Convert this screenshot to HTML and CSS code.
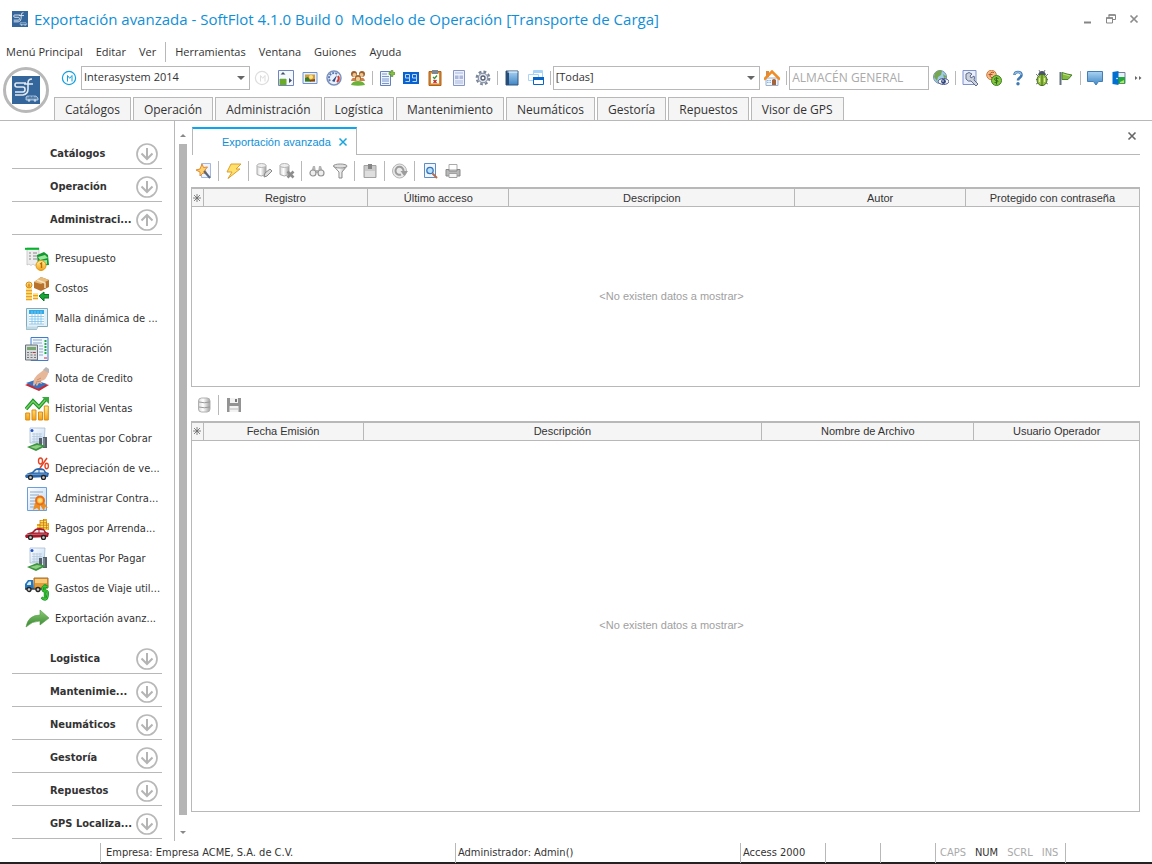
FILE: index.html
```html
<!DOCTYPE html>
<html lang="es">
<head>
<meta charset="utf-8">
<title>Exportación avanzada - SoftFlot</title>
<link rel="stylesheet" href="styles.css">
</head>
<body>
<svg class="defs" aria-hidden="true">
  <defs>
    <linearGradient id="gold" x1="0" y1="0" x2="0" y2="1"><stop offset="0" stop-color="#fff3a0"/><stop offset="1" stop-color="#f0a018"/></linearGradient>
    <linearGradient id="blue" x1="0" y1="0" x2="0" y2="1"><stop offset="0" stop-color="#a9d3f3"/><stop offset="1" stop-color="#3f86c4"/></linearGradient>
    <linearGradient id="paper" x1="0" y1="0" x2="1" y2="1"><stop offset="0" stop-color="#ffffff"/><stop offset="1" stop-color="#bfd9f3"/></linearGradient>
    <linearGradient id="leaf" x1="0" y1="0" x2="0" y2="1"><stop offset="0" stop-color="#8ccb76"/><stop offset="1" stop-color="#37852f"/></linearGradient>
    <linearGradient id="silver" x1="0" y1="0" x2="1" y2="0"><stop offset="0" stop-color="#d8d8d8"/><stop offset=".4" stop-color="#ffffff"/><stop offset="1" stop-color="#a0a0a0"/></linearGradient>
    <symbol id="down" viewBox="0 0 22 22"><circle cx="11" cy="11" r="10" fill="none" stroke="#b8b8b8" stroke-width="1.7"/><path d="M11 5v11M5.500 10.500l5.500 5.500 5.500-5.500" fill="none" stroke="#b4b4b4" stroke-width="2"/></symbol>
    <symbol id="up" viewBox="0 0 22 22"><circle cx="11" cy="11" r="10" fill="none" stroke="#b8b8b8" stroke-width="1.7"/><path d="M11 17V6M5.500 11.500l5.500-5.500 5.500 5.500" fill="none" stroke="#b4b4b4" stroke-width="2"/></symbol>
    <symbol id="logo" viewBox="0 0 28 28"><path fill="#34669c" d="M0 0h28v28H0z"/><path d="M14 7H4.500Q3 7 3 9q0 2 2 2h6q2 0 2 2.500T11 16H3M3 19h8q5-1 5-6V7q0-4 4-4M12 8h9" fill="none" stroke="#e2eaf2" stroke-width="1.600"/><path d="M15 20h9l2 2v2H14v-3z" fill="#7d9fc3" stroke="#b9cde0" stroke-width=".8"/><path d="M15 22h10M18 20v2M21 20v2" stroke="#34669c" stroke-width=".8"/><circle cx="17" cy="24.500" r="1.300" fill="#c5d6e6"/><circle cx="23" cy="24.500" r="1.300" fill="#c5d6e6"/></symbol>
    <symbol id="m" viewBox="0 0 16 16"><circle cx="8" cy="8" r="6.600" fill="none" stroke="currentColor" stroke-width="1.200"/><path d="M6.500 11.500V5.500l2.200 2.800 2.300-2.800v6" fill="none" stroke="currentColor"/></symbol>
    <symbol id="bill" viewBox="0 0 24 24"><path d="M5 1h15l-1 15H5z" fill="url(#paper)" stroke="#a8bdd2" stroke-width=".8"/><circle cx="7" cy="3.500" r="1.500" fill="#2050c8"/><path d="M7 7h10M7 9.500h10M7 12h10M7 14.500h10M9 6v10M12 6v10M15 6v10" stroke="#b4c6da" stroke-width=".7"/><path d="M14 11h3v9h-3zM18 10h4v11h-4z" fill="#56616b"/><path d="M19 11v9" stroke="#9aa6b0"/><path d="M2 20l10-4 9 3-10 5z" fill="#3c9440"/><path d="M5 20l7-2 5 1-6 3z" fill="#8fcf83"/></symbol>
    <symbol id="car" viewBox="0 0 24 12"><path d="M0 8q1-3 7-4l3-3q4-2 9 0l2 3 3 1-1 4-22 1z" fill="currentColor"/><path d="M8.500 4.500l3-2.500h2v2.500zM14.500 2q3 0 4 .5l1 2h-5z" fill="#e2edf6"/><path d="M1 6.500l21-.5" stroke="#fff" stroke-opacity=".55" stroke-width=".7"/><circle cx="5.500" cy="9.500" r="2" fill="#ccc" stroke="#222" stroke-width="1.300"/><circle cx="18.500" cy="9.500" r="2" fill="#ccc" stroke="#222" stroke-width="1.300"/></symbol>
  </defs>
</svg>

<header class="titlebar">
  <svg class="app-icon" viewBox="0 0 28 28"><use href="#logo"/></svg>
  <h1 class="title">Exportación avanzada - SoftFlot 4.1.0 Build 0&nbsp; Modelo de Operación [Transporte de Carga]</h1>
  <div class="window-buttons">
    <button type="button" aria-label="Minimizar"><svg viewBox="0 0 12 12"><path d="M2 9.500h7" stroke="#858585" stroke-width="2"/></svg></button>
    <button type="button" aria-label="Restaurar"><svg viewBox="0 0 12 12"><path d="M1.500 5h6v5h-6zM4 5V2h6.500v4.500H8" fill="none" stroke="#858585"/><path d="M1 5h7M3.500 2h7" stroke="#858585" stroke-width="1.600"/></svg></button>
    <button type="button" aria-label="Cerrar"><svg viewBox="0 0 12 12"><path d="M2.500 2.500l7 7M9.500 2.500l-7 7" stroke="#8c8c8c" stroke-width="1.700"/></svg></button>
  </div>
</header>

<nav class="menu" aria-label="Menú">
  <button type="button">Menú Principal</button><button type="button">Editar</button><button type="button">Ver</button><span class="menu-sep"></span><button type="button">Herramientas</button><button type="button">Ventana</button><button type="button">Guiones</button><button type="button">Ayuda</button>
</nav>

<div class="ribbon">
  <button type="button" class="orb" aria-label="SoftFlot"><svg viewBox="0 0 28 28"><use href="#logo"/></svg></button>
  <div class="ribbon-rows">
    <div class="toolbar">
      <button type="button" class="tool accent" aria-label="Modelo"><svg viewBox="0 0 16 16"><use href="#m"/></svg></button>
      <span class="combo combo-model"><select aria-label="Modelo de operación"><option>Interasystem 2014</option></select></span>
      <button type="button" class="tool faded" aria-label="Modelo inactivo"><svg viewBox="0 0 16 16"><use href="#m"/></svg></button>
      <button type="button" class="tool" aria-label="Panel"><svg viewBox="0 0 16 16"><path d="M.5.500h15v15H.5z" fill="#f5f8fd" stroke="#7085bd"/><path d="M1.500 9h7v6h-7z" fill="#6bab28"/><path d="M2 8.500h6" stroke="#d3dde8"/><path d="M5 2L2.500 4.500h5zM11 8l3 2.500-3 2.500z" fill="#44506a"/></svg></button>
      <button type="button" class="tool" aria-label="Imagen"><svg viewBox="0 0 16 16"><path d="M1 2.500h14v11H1z" fill="#e8f1ff" stroke="#7192c8"/><path d="M3 4.500h10v7H3z" fill="#ce9c3d"/><path d="M3 8l3-1 3 4.500H3z" fill="#397b2c"/><circle cx="9" cy="7" r="2" fill="#ffe27a"/><path d="M8 10l5-1v2.500H8z" fill="#834a19"/></svg></button>
      <button type="button" class="tool" aria-label="Indicadores"><svg viewBox="0 0 16 16"><circle cx="8" cy="8" r="7" fill="#e9f2fc" stroke="#7b91bd" stroke-width="1.500"/><path d="M4 11a5 5 0 0 1 7-7" fill="none" stroke="#5d7bb5" stroke-width="2" stroke-dasharray="2 1"/><path d="M12 6q2 3-1 6" fill="none" stroke="#d8392b" stroke-width="2"/><path d="M6 11l5-6-2.500 7z" fill="#344b87"/></svg></button>
      <button type="button" class="tool" aria-label="Usuarios"><svg viewBox="0 0 16 16"><circle cx="4" cy="4" r="3" fill="#9b6030"/><circle cx="12" cy="4" r="3" fill="#9b6030"/><circle cx="4.500" cy="5" r="2" fill="#f1c58f"/><circle cx="11.500" cy="5" r="2" fill="#f1c58f"/><path d="M1 11q1-4 4-3h6q3-1 4 3z" fill="#d07f4c"/><circle cx="8" cy="8" r="3" fill="#9e652d"/><circle cx="8" cy="9" r="2.200" fill="#f4cc95"/><path d="M1 15q1-4 7-4t7 4q-7 1.500-14 0" fill="#6cb13a"/></svg></button>
      <span class="sep"></span>
      <button type="button" class="tool" aria-label="Nuevo registro"><svg viewBox="0 0 16 16"><path d="M1.500 1.500h10v14h-10z" fill="#edf4ff" stroke="#6680b9"/><path d="M3 4h5M3 6.500h7M3 9h7M3 11h7M3 13.500h7" stroke="#7a96cb"/><path d="M10 2.500h2V.500h2v2h2v2h-2v2h-2v-2h-2z" fill="#86c043" stroke="#568d29" stroke-width=".6"/></svg></button>
      <button type="button" class="tool" aria-label="Contador"><svg viewBox="0 0 16 16"><path d="M0 2h16v12H0z" fill="#0a62ce"/><path d="M6.500 8h-4V4.500h4v7h-4M13.500 8h-4V4.500h4v7h-4" fill="none" stroke="#bcd8ff"/></svg></button>
      <button type="button" class="tool" aria-label="Tareas"><svg viewBox="0 0 16 16"><path d="M2 1.500h12v14H2z" fill="#d9882d" stroke="#ad611a"/><path d="M4 3.500h8v10H4z" fill="#fff"/><path d="M5 0h6v4H5z" fill="#7f8792"/><path d="M6 7l1.500 1.500L10 5.500" fill="none" stroke="#369333" stroke-width="1.300"/><path d="M6.500 10l3 3M9.500 10l-3 3" stroke="#c32929" stroke-width="1.300"/></svg></button>
      <button type="button" class="tool" aria-label="Formulario"><svg viewBox="0 0 16 16"><path d="M2.500.500h11v15h-11z" fill="#eaf0fc" stroke="#8796c5"/><path d="M4 3h8M4 11h8M4 13h8" stroke="#a9b8dc"/><path d="M4 5.500h3.500v3.500H4zM8.500 5.500H12v3.500H8.500z" fill="#a9b8dc"/></svg></button>
      <button type="button" class="tool" aria-label="Configuración"><svg viewBox="0 0 16 16"><circle cx="8" cy="8" r="6.300" fill="none" stroke="#7a859a" stroke-width="2.200" stroke-dasharray="2.800 2.100"/><circle cx="8" cy="8" r="4.800" fill="#dfe4ec" stroke="#7a859a"/><circle cx="8" cy="8" r="2" fill="#fff" stroke="#545f76" stroke-width="1.300"/></svg></button>
      <span class="sep"></span>
      <button type="button" class="tool" aria-label="Catálogo"><svg viewBox="0 0 16 16"><path d="M2 1h12v14H2z" fill="url(#blue)" stroke="#31577f"/><path d="M2 1h3v14H2z" fill="#294c77"/><path d="M3.500 1.500h10v1h-10z" fill="#eef7ff"/></svg></button>
      <button type="button" class="tool" aria-label="Ventanas"><svg viewBox="0 0 16 16"><path d="M5.500.500h9v7h-9z" fill="#fff" stroke="#a8d5f7"/><path d="M5 1h10v2H5z" fill="#a8d5f7"/><path d="M.5 4.500h10v6H.5z" fill="#fff" stroke="#a8d5f7"/><path d="M5.500 7.500h10v7h-10z" fill="#fff" stroke="#0666c7"/><path d="M5 7h11v3H5z" fill="#0666c7"/></svg></button>
      <span class="sep"></span>
      <span class="combo combo-filter"><select aria-label="Filtro"><option>[Todas]</option></select></span>
      <button type="button" class="tool" aria-label="Inicio"><svg viewBox="0 0 16 16"><path d="M2 8h12v7.500H2z" fill="#f2f6fc" stroke="#9ab0ce"/><path d="M2 1h3v6H2z" fill="#d88b45"/><path d="M0 9.500l8-8 8 8" fill="none" stroke="#ef8c25" stroke-width="2.500"/><path d="M8 15v-5q2-2 4 0v5z" fill="#a46437"/><path d="M3 10h4v3H3z" fill="#8ab9e8"/><path d="M5 10v3M3 11.500h4" stroke="#fff" stroke-width=".7"/></svg></button>
      <span class="sep"></span>
      <input class="store" type="text" value="ALMACÉN GENERAL" aria-label="Almacén" readonly>
      <button type="button" class="tool" aria-label="Vista global"><svg viewBox="0 0 16 16"><circle cx="7" cy="7" r="6.500" fill="#9dcbe8" stroke="#7891a7"/><path d="M2 3q4-4 7-2l-1 4-3 2-1 4-3-4zM10 4l4 3-3 1z" fill="#76a650"/><ellipse cx="10.500" cy="11.500" rx="5.300" ry="3" fill="#f6f8ff" stroke="#4c5684"/><circle cx="10.500" cy="11.500" r="2.400" fill="#30457c"/><circle cx="10" cy="11" r=".8" fill="#fff"/></svg></button>
      <span class="sep"></span>
      <button type="button" class="tool" aria-label="Herramientas"><svg viewBox="0 0 16 16"><path d="M1 .5h13v14H1z" fill="#e9efff" stroke="#7e91c8"/><path d="M4 4q3-3 6 0l-2 2 1 2 3-2q1 2 0 4l4 4-2 2-5-5q-3 1-5-2z" fill="#cbd2db" stroke="#536080" stroke-width=".9"/></svg></button>
      <button type="button" class="tool" aria-label="Monedas"><svg viewBox="0 0 16 16"><circle cx="5.500" cy="5" r="4.800" fill="#f5bd85" stroke="#c97b44"/><path d="M8 2.500Q4 1.500 4 5t4 2.500M2.500 4.500h4" fill="none" stroke="#b05532"/><circle cx="10.500" cy="10.500" r="5" fill="#86c53c" stroke="#398325"/><path d="M12.500 8.500q-4-1.500-4 .5t3 1.500q2 1.500-3 2M10.500 7v7.500" fill="none" stroke="#2f6d1c"/></svg></button>
      <button type="button" class="tool" aria-label="Ayuda"><svg viewBox="0 0 16 16"><path d="M4.500 5q0-3 3.500-3t3.500 3Q11.500 7 9.500 8 8 9 8 10.500" fill="none" stroke="#3f78b3" stroke-width="2.600"/><path d="M4.700 4.500Q5 2 8 2t3 3" fill="none" stroke="#9cc5e8" stroke-width="1.200"/><circle cx="8" cy="13.700" r="1.700" fill="#3f78b3"/></svg></button>
      <button type="button" class="tool" aria-label="Reportar error"><svg viewBox="0 0 16 16"><path d="M4 6L2 4M12 6l2-2M4 9.500H2M12 9.500h2M4 13l-2 1M12 13l2 1M6 2L5 0M10 2l1-2" stroke="#66706a" stroke-width=".9"/><path d="M4 5q1-4 4-4t4 4z" fill="#48546a"/><ellipse cx="8" cy="10" rx="5" ry="5.600" fill="#95c041" stroke="#456d24"/><path d="M8 5v10" stroke="#416a23"/><path d="M5.500 8v4M10.500 8v4" stroke="#ddf09c" stroke-width="1.300"/></svg></button>
      <button type="button" class="tool" aria-label="Bandera"><svg viewBox="0 0 16 16"><path d="M2.500 2v13" stroke="#657080" stroke-width="2"/><path d="M4 2.500l5 1.500 5 1-4 4.500H4z" fill="#86bb40" stroke="#4b8233"/><path d="M5 4l7 2" stroke="#bde573"/></svg></button>
      <span class="sep"></span>
      <button type="button" class="tool" aria-label="Mensajes"><svg viewBox="0 0 16 16"><path d="M.5 1.500h15v10h-4L9 15l-2.500-3.500h-6z" fill="url(#blue)" stroke="#427fb6"/></svg></button>
      <button type="button" class="tool" aria-label="Salir"><svg viewBox="0 0 16 16"><path d="M6 2.500h8v11H6z" fill="#e8f0f8" stroke="#72819b"/><path d="M7 7h7v6.500H7z" fill="#22a83f"/><path d="M9 12l4-2v3H9z" fill="#b4e75b"/><path d="M1.500 2L7.500 1v14l-6-1z" fill="#006fd0"/><circle cx="6" cy="8.500" r=".8" fill="#fff"/></svg></button>
      <button type="button" class="tool tool-more" aria-label="Más"><svg viewBox="0 0 8 6"><path d="M1 1l2.500 2L1 5zM5 1l2.500 2L5 5z" fill="#666"/></svg></button>
    </div>
    <div class="module-tabs">
      <button type="button">Catálogos</button><button type="button">Operación</button><button type="button">Administración</button><button type="button">Logística</button><button type="button">Mantenimiento</button><button type="button">Neumáticos</button><button type="button">Gestoría</button><button type="button">Repuestos</button><button type="button">Visor de GPS</button>
    </div>
  </div>
</div>

<div class="workspace">
  <aside class="sidebar">
    <button type="button" class="group"><span>Catálogos</span><svg viewBox="0 0 22 22"><use href="#down"/></svg></button>
    <button type="button" class="group"><span>Operación</span><svg viewBox="0 0 22 22"><use href="#down"/></svg></button>
    <button type="button" class="group" aria-expanded="true"><span>Administraci...</span><svg viewBox="0 0 22 22"><use href="#up"/></svg></button>
    <nav class="items" aria-label="Administración">
      <a href="#"><svg viewBox="0 0 24 24"><path d="M2 1h12v17l-2-1-2 1.500L8 17l-2 1.500L4 17l-2 1z" fill="#ededed" stroke="#bbb" stroke-width=".7"/><path d="M0 .8h14v2H0z" fill="#00b52a"/><path d="M4 6h2M8 6h4M4 9h2M8 9h4M4 12h2M8 12h4" stroke="#888"/><path d="M12 8l7-3 4 3 1 10-11 1z" fill="#149832"/><path d="M13 10l7-2 3 3-8 2zM14 14l8-1v4l-7 1z" fill="#9de79c"/><circle cx="16" cy="18.500" r="5" fill="url(#gold)" stroke="#e29615"/><path d="M15 17l1.500-1v5" fill="none" stroke="#bd6a00" stroke-width="1.400"/></svg>Presupuesto</a>
      <a href="#"><svg viewBox="0 0 24 24"><path d="M9 5l7-5 8 3v7l-8 4-7-3z" fill="#b8722c"/><path d="M9 5l7-5 8 3-8 4z" fill="#e7bd7e"/><path d="M12 3l8 3v5" fill="none" stroke="#f8e3bb" stroke-width="1.500"/><circle cx="4" cy="8" r="3" fill="url(#gold)" stroke="#db8c19"/><path d="M4 6.500v3" stroke="#b96c0d"/><path d="M1 13h6M1 16h6M1 19h6M1 22h6M8 18h5M8 21h5" stroke="#e48b17" stroke-width="2.600"/><path d="M1 12.500h6M1 15.500h6M1 18.500h6M1 21.500h6M8 17.500h5M8 20.500h5" stroke="#ffe060" stroke-width="1.300"/><path d="M14 19l5-4v2.500h5V21h-5v3z" fill="#19a537" stroke="#087421"/></svg>Costos</a>
      <a href="#"><svg viewBox="0 0 24 24"><path d="M1.500 1.500h21v18h-10l-1 3h-10z" fill="#e4f0f7" stroke="#7fabba"/><path d="M4 3h15v14H4z" fill="#fff"/><path d="M4 3h15v4H4z" fill="#33aae8"/><path d="M4 9.500h15M4 12h15M4 14.500h15M4 17h15M7 4v13M10 4v13M13 4v13M16 4v13" stroke="#87c6eb" stroke-width=".9"/><path d="M1.500 19.500h11l-1 3h-10z" fill="#c3dae4"/></svg>Malla dinámica de ...</a>
      <a href="#"><svg viewBox="0 0 24 24"><path d="M6 .5h17v23H6z" fill="#eef6ff" stroke="#407cce"/><path d="M8 3h9M8 6h9M14 9h4M14 12h4M14 15h4M14 18h4" stroke="#8ea7c6"/><path d="M20.500 3v15" stroke="#22aa3b" stroke-width="2" stroke-dasharray="2 1"/><path d="M19 21h3" stroke="#e22"/><path d="M.5 8h12v15H.5z" fill="#d7d9dc" stroke="#6a737c"/><path d="M2 10h9v3H2z" fill="#77a66f"/><path d="M2 15.500h9M2 18h9M2 20.500h9" stroke="#777" stroke-dasharray="2 1.500"/><path d="M8 15.500h2" stroke="#ce2b2b"/></svg>Facturación</a>
      <a href="#"><svg viewBox="0 0 24 24"><path d="M0 18l10-4 14 4-10 6z" fill="#cb2730"/><path d="M1 16l9-3 12 4-9 5z" fill="#3b72bf"/><path d="M8 18l1-6q2-4 7-7l5-4 3 3q-2 7-5 9l-3 1 1 3-3-1-2 3-1-1 1-3-3 4z" fill="#e7b79a"/><path d="M18 3l3-3 3 2v4z" fill="#b9b6b8"/><path d="M12 13l4-2M11 15l5-1" stroke="#c28666" stroke-width=".8"/></svg>Nota de Credito</a>
      <a href="#"><svg viewBox="0 0 24 24"><path d="M.7 16h4v7h-4zM7 13h4v10H7zM13.500 15h4v8h-4zM19.300 9h4v14h-4z" fill="url(#gold)" stroke="#e18b08"/><path d="M1 12l7-8 6 6 7-8" fill="none" stroke="#19932e" stroke-width="3.600"/><path d="M1 12l7-8 6 6 7-8" fill="none" stroke="#78d35a" stroke-width="1.500"/><path d="M17 0h7v7z" fill="#38ab3c"/></svg>Historial Ventas</a>
      <a href="#"><svg viewBox="0 0 24 24"><use href="#bill"/></svg>Cuentas por Cobrar</a>
      <a href="#"><svg viewBox="0 0 24 24" color="#2867ac"><svg y="11" width="24" height="12" viewBox="0 0 24 12"><use href="#car"/></svg><path d="M15 11l7-10" stroke="#e74323" stroke-width="1.500"/><ellipse cx="15.500" cy="4" rx="2" ry="3" fill="none" stroke="#e74323" stroke-width="1.400"/><ellipse cx="21.700" cy="9" rx="1.700" ry="2.700" fill="none" stroke="#e74323" stroke-width="1.400"/></svg>Depreciación de ve...</a>
      <a href="#"><svg viewBox="0 0 24 24"><path d="M2.500.500h19v23h-19z" fill="url(#paper)" stroke="#6b9eda"/><path d="M5 5h13M5 8h9M5 11h7M5 14h7M5 17h6M5 20h5" stroke="#91a9c8"/><path d="M10 16l-2 7 4-2 3 3v-6l4 6 1-4 3 1-5-7z" fill="#ec8d23"/><circle cx="15" cy="13.500" r="4" fill="#ffb642" stroke="#e66e19" stroke-width="2"/><circle cx="15" cy="13.500" r="2" fill="#ffe078"/></svg>Administrar Contra...</a>
      <a href="#"><svg viewBox="0 0 24 24" color="#aa1828"><path d="M12 12V7h3V3h3V2h4v4h2v7H12z" fill="#e5a31f"/><path d="M12 9.500h11M12 12h11M15 7h8M15 4.500h7" stroke="#ffe16c" stroke-width="1.200"/><path d="M15 3v9M18.500 2v10M21.500 4v8" stroke="#ba791b" stroke-width=".7"/><svg y="11" width="24" height="12" viewBox="0 0 24 12"><use href="#car"/></svg></svg>Pagos por Arrenda...</a>
      <a href="#"><svg viewBox="0 0 24 24"><use href="#bill"/></svg>Cuentas Por Pagar</a>
      <a href="#"><svg viewBox="0 0 24 24"><path d="M9 1h14v10H9z" fill="#e29c3c" stroke="#a96a28"/><path d="M10 2h12v4H10z" fill="#f8cc79"/><path d="M8 3H3L0 7v5h9z" fill="#2676bc"/><path d="M2 7l2-2.500h2V8H2z" fill="#d4ecfb"/><path d="M0 12h18" stroke="#444" stroke-width="1.500"/><circle cx="4" cy="12.500" r="2" fill="#ccc" stroke="#222" stroke-width="1.300"/><circle cx="13" cy="12.500" r="2" fill="#ccc" stroke="#222" stroke-width="1.300"/><path d="M23 10q-5.500-2-5.500 1.500t3 2.500 2 5-6 1.500M20 7v16" fill="none" stroke="#118b22" stroke-width="2.400"/><path d="M23 10q-5.500-2-5.500 1.500t3 2.500 2 5-6 1.500M20 7v16" fill="none" stroke="#3fc435" stroke-width="1.200"/></svg>Gastos de Viaje util...</a>
      <a href="#"><svg viewBox="0 0 24 24"><path d="M1 20q2-12 14-12V3l9 8-9 7v-4Q7 14 1 20z" fill="url(#leaf)" stroke="#579c4c" stroke-width=".6"/></svg>Exportación avanz...</a>
    </nav>
    <button type="button" class="group"><span>Logistica</span><svg viewBox="0 0 22 22"><use href="#down"/></svg></button>
    <button type="button" class="group"><span>Mantenimie...</span><svg viewBox="0 0 22 22"><use href="#down"/></svg></button>
    <button type="button" class="group"><span>Neumáticos</span><svg viewBox="0 0 22 22"><use href="#down"/></svg></button>
    <button type="button" class="group"><span>Gestoría</span><svg viewBox="0 0 22 22"><use href="#down"/></svg></button>
    <button type="button" class="group"><span>Repuestos</span><svg viewBox="0 0 22 22"><use href="#down"/></svg></button>
    <button type="button" class="group"><span>GPS Localiza...</span><svg viewBox="0 0 22 22"><use href="#down"/></svg></button>
  </aside>
  <div class="scrollbar" aria-hidden="true"><i class="arrow-up"></i><i class="thumb"></i><i class="arrow-down"></i></div>

  <main class="content">
    <div class="doc-tabs">
      <div class="doc-tab"><span>Exportación avanzada</span><button type="button" aria-label="Cerrar pestaña"><svg viewBox="0 0 10 10"><path d="M1.500 1.500l7 7M8.500 1.500l-7 7" stroke="#16a5df" stroke-width="1.500"/></svg></button></div>
      <div class="doc-rest"><button type="button" aria-label="Cerrar documento"><svg viewBox="0 0 10 10"><path d="M1.500 1.500l7 7M8.500 1.500l-7 7" stroke="#666" stroke-width="1.600"/></svg></button></div>
    </div>
    <div class="actions">
      <button type="button" aria-label="Asistente"><svg viewBox="0 0 16 16"><path d="M5.500.500h9v14h-9z" fill="#edf3ff" stroke="#a3b7df"/><path d="M6 1l1.500 3.500 4-.5L9 7l2 4-4-1-3 3v-4L0 7l4-1z" fill="#ffd06e" stroke="#e18b2d"/><path d="M8 8l6 7" stroke="#56667e" stroke-width="2"/></svg></button>
      <span class="rule"></span>
      <button type="button" aria-label="Ejecutar"><svg viewBox="0 0 16 16"><path d="M5 1h10l-5 5h4L2 15.500 6 9H1z" fill="#ffe06a" stroke="#dda02c"/></svg></button>
      <span class="rule"></span>
      <button type="button" aria-label="Editar" disabled><svg viewBox="0 0 16 16"><path d="M1 2.500v9q4 3 9 0v-9z" fill="url(#silver)" stroke="#aaa"/><ellipse cx="5.500" cy="2.500" rx="4.500" ry="2" fill="#eee" stroke="#b4b4b4"/><path d="M8 14l1-4 5-4 2 2-5 5z" fill="#ddd" stroke="#888"/></svg></button>
      <button type="button" aria-label="Eliminar" disabled><svg viewBox="0 0 16 16"><path d="M1 2.500v9q4 3 9 0v-9z" fill="url(#silver)" stroke="#aaa"/><ellipse cx="5.500" cy="2.500" rx="4.500" ry="2" fill="#eee" stroke="#b4b4b4"/><path d="M8.500 8.500l6 6M14.500 8.500l-6 6" stroke="#8d8d8d" stroke-width="2.600"/></svg></button>
      <span class="rule"></span>
      <button type="button" aria-label="Buscar" disabled><svg viewBox="0 0 16 16"><path d="M4 3h2l1 6H2zM10 3h2l2 6H9zM6 7h4v3H6z" fill="#b5b5b5"/><circle cx="4" cy="10" r="3" fill="#eee" stroke="#949494" stroke-width="1.200"/><circle cx="12" cy="10" r="3" fill="#eee" stroke="#949494" stroke-width="1.200"/></svg></button>
      <button type="button" aria-label="Filtrar" disabled><svg viewBox="0 0 16 16"><path d="M1.500 3L7 9v6h3V9l5-6z" fill="url(#silver)" stroke="#8b8b8b"/><ellipse cx="8.200" cy="3" rx="6.800" ry="2" fill="#ddd" stroke="#929292"/></svg></button>
      <span class="rule"></span>
      <button type="button" aria-label="Pegar" disabled><svg viewBox="0 0 16 16"><path d="M2 2.500h12v12H2z" fill="#c9c9c9" stroke="#a2a2a2"/><path d="M3 8h10v6H3z" fill="#dedede"/><path d="M6 1h4v5H6z" fill="#858585"/></svg></button>
      <span class="rule"></span>
      <button type="button" aria-label="Actualizar" disabled><svg viewBox="0 0 16 16"><circle cx="7.500" cy="8" r="7" fill="#e9e9e9" stroke="#b5b5b5"/><path d="M9 11.500A4 4 0 1 1 11.500 8" fill="none" stroke="#9c9c9c" stroke-width="2"/><path d="M8.500 8H16l-3.800 5z" fill="#9c9c9c"/></svg></button>
      <span class="rule"></span>
      <button type="button" aria-label="Vista previa"><svg viewBox="0 0 16 16"><path d="M2.500.500h11v14h-11z" fill="#eff6ff" stroke="#5f8dc3"/><circle cx="8" cy="7.500" r="3.200" fill="#b7e2ff" stroke="#3975b8" stroke-width="1.300"/><path d="M10.500 10.500L15 15" stroke="#ba6c49" stroke-width="2"/></svg></button>
      <button type="button" aria-label="Imprimir"><svg viewBox="0 0 16 16"><path d="M4 1.500h8V7H4z" fill="#fff" stroke="#aaa"/><path d="M1 6.500h3V8h8V6.500h3V13H1z" fill="#b8b8b8" stroke="#898989"/><path d="M4 10.500h8v4H4z" fill="#f6f6f6" stroke="#a2a2a2"/></svg></button>
    </div>

    <section class="grid grid-records">
      <table>
        <colgroup><col class="col-mark"><col class="r1"><col class="r2"><col class="r3"><col class="r4"><col class="r5"></colgroup>
        <thead><tr><th><svg viewBox="0 0 8 8"><path d="M4 0v8M0 4h8M1 1l6 6M7 1L1 7" stroke="#666" stroke-width=".8"/></svg></th><th>Registro</th><th>Último acceso</th><th>Descripcion</th><th>Autor</th><th>Protegido con contraseña</th></tr></thead>
      </table>
      <p>&lt;No existen datos a mostrar&gt;</p>
    </section>

    <div class="actions">
      <button type="button" aria-label="Base de datos" disabled><svg viewBox="0 0 16 16"><rect x="2.500" y="1" width="11.500" height="14" rx="3" fill="url(#silver)" stroke="#b0b0b0"/><path d="M3 5q5 1.500 11 0M3 10q5 1.500 11 0" fill="none" stroke="#999"/></svg></button>
      <span class="rule"></span>
      <button type="button" aria-label="Guardar" disabled><svg viewBox="0 0 16 16"><path d="M1 1h14v14H1z" fill="#939393"/><path d="M4 1h8v5H4zM3.500 9h9v6h-9z" fill="#f3f3f3"/><path d="M9 2h2v3H9z" fill="#777"/><path d="M4 12h8" stroke="#bbb"/></svg></button>
    </div>

    <section class="grid grid-files">
      <table>
        <colgroup><col class="col-mark"><col class="f1"><col class="f2"><col class="f3"><col class="f4"></colgroup>
        <thead><tr><th><svg viewBox="0 0 8 8"><path d="M4 0v8M0 4h8M1 1l6 6M7 1L1 7" stroke="#666" stroke-width=".8"/></svg></th><th>Fecha Emisión</th><th>Descripción</th><th>Nombre de Archivo</th><th>Usuario Operador</th></tr></thead>
      </table>
      <p>&lt;No existen datos a mostrar&gt;</p>
    </section>
  </main>
</div>

<footer class="status">
  <span></span><span>Empresa: Empresa ACME, S.A. de C.V.</span><span>Administrador: Admin()</span><span>Access 2000</span><span></span><span></span><span class="keys"><i>CAPS</i><i class="on">NUM</i><i>SCRL</i><i>INS</i></span><span></span>
</footer>
</body>
</html>
```
FILE: styles.css
```css
:root {
  --line: #b8b8b8;
  --ink: #333;
  --ui: "Open Sans", "Noto Sans", sans-serif;
  --small: "DejaVu Sans Condensed", "DejaVu Sans", sans-serif;
  --classic: "Liberation Sans", Arial, sans-serif;
}

* { box-sizing: border-box; }

body {
  display: flex;
  flex-direction: column;
  min-height: 100vh;
  margin: 0;
  background: #fff;
  color: var(--ink);
  font: 12px/16px var(--ui);
}

button {
  padding: 0;
  border: 0;
  background: none;
  color: inherit;
  font: inherit;
}

svg { display: block; flex: none; }
.defs { position: absolute; width: 0; height: 0; }

/* Title and menu */
.titlebar {
  display: flex;
  align-items: center;
  height: 38px;
  padding: 0 12px;
}
.app-icon { width: 16px; height: 16px; }
.title {
  flex: 1;
  margin: 0 0 0 6px;
  color: #0f8fd8;
  font-size: 15px;
  font-weight: 400;
  line-height: 24px;
  white-space: nowrap;
}
.window-buttons { display: flex; gap: 11px; }
.window-buttons svg { width: 12px; height: 12px; }
.menu {
  display: flex;
  align-items: center;
  gap: 13px;
  height: 28px;
  padding: 0 6px;
  font-size: 11px;
}
.menu-sep { width: 1px; height: 20px; margin: 0 -4px; background: var(--line); }

/* Ribbon */
.ribbon {
  display: flex;
  height: 55px;
  border-bottom: 1px solid var(--line);
}
.orb {
  display: grid;
  place-items: center;
  width: 46px;
  height: 46px;
  margin: 1px 5px 0 3px;
  border: 3px solid var(--line);
  border-radius: 50%;
  flex: none;
}
.orb svg { width: 28px; height: 28px; }
.ribbon-rows { flex: 1; min-width: 0; }
.toolbar { display: flex; align-items: center; height: 24px; padding: 0 7px 0 3px; }
.tool {
  display: grid;
  place-items: center;
  flex: none;
  width: 24px;
  height: 24px;
}
.tool svg { width: 16px; height: 16px; }
.accent { color: #149fe0; }
.faded { color: #ddd; }
.tool-more { width: 14px; }
.tool-more svg { width: 8px; height: 6px; }
.sep { flex: none; width: 1px; height: 14px; margin: 0 2px; background: var(--line); }
.combo { position: relative; height: 24px; }
.combo::after {
  content: "";
  position: absolute;
  top: 10px;
  right: 5px;
  border: 4px solid transparent;
  border-top-color: #666;
  border-bottom: 0;
  pointer-events: none;
}
.combo-model { flex: 169 0 0; }
.combo-filter { flex: 208 0 0; }
.combo select,
.store {
  width: 100%;
  height: 24px;
  padding: 0 2px 2px;
  border: 1px solid var(--line);
  border-radius: 0;
  outline: 0;
  background: #fff;
  color: var(--ink);
  font: 11px/16px var(--ui);
  appearance: none;
}
.store { flex: 134 0 0; width: 0; color: #aaa; font-size: 12px; }
.module-tabs {
  display: flex;
  gap: 2px;
  height: 24px;
  margin-top: 7px;
}
.module-tabs button {
  height: 23px;
  padding: 1px 10px 0;
  border: 1px solid var(--line);
  border-bottom: 0;
  background: #f5f5f5;
}

/* Sidebar */
.workspace { display: flex; flex: 1; }
.sidebar {
  width: 175px;
  padding: 15px 12px 2px;
  border-right: 1px solid var(--line);
  flex: none;
}
.group {
  display: flex;
  align-items: center;
  width: 150px;
  height: 33px;
  padding: 3px 4px 0 38px;
  border-bottom: 1px solid var(--line);
  font: bold 11px/16px var(--small);
  text-align: left;
}
.group span { flex: 1; white-space: nowrap; }
.group svg { width: 22px; height: 22px; }
.items { padding: 9px 0 7px 13px; }
.items a {
  display: flex;
  align-items: center;
  gap: 6px;
  height: 30px;
  color: var(--ink);
  font: 11px/16px var(--small);
  text-decoration: none;
  white-space: nowrap;
}
.items a > svg { width: 24px; height: 24px; }
.scrollbar {
  display: flex;
  flex-direction: column;
  align-items: center;
  width: 16px;
  padding: 13px 0 7px;
  flex: none;
}
.thumb { flex: 1; width: 8px; margin: 7px 0 16px; background: #b5b5b5; }
.arrow-up, .arrow-down { border: 3px solid transparent; }
.arrow-up { border-top: 0; border-bottom-color: #888; }
.arrow-down { border-bottom: 0; border-top-color: #888; }

/* Document area */
.content {
  display: flex;
  flex-direction: column;
  flex: 1;
  min-width: 0;
  padding: 6px 12px 29px 0;
  font: 11px/14px var(--classic);
}
.doc-tabs { display: flex; height: 28px; margin-left: 1px; }
.doc-tab {
  display: flex;
  align-items: center;
  gap: 7px;
  padding: 0 8px 0 29px;
  border: 1px solid var(--line);
  border-top: 2px solid #0ba6f0;
  border-bottom: 0;
  color: #0f8fd8;
  white-space: nowrap;
}
.doc-tab svg, .doc-rest svg { width: 10px; height: 10px; }
.doc-rest {
  display: flex;
  flex: 1;
  align-items: flex-start;
  justify-content: flex-end;
  padding: 4px 3px 0 0;
  border-bottom: 1px solid var(--line);
}
.actions { display: flex; align-items: center; height: 32px; padding-left: 1px; }
.actions button { display: grid; place-items: center; width: 23px; height: 24px; }
.actions svg { width: 16px; height: 16px; }
.rule { width: 1px; height: 20px; margin: 0 3px; background: var(--line); }
.grid {
  display: flex;
  flex-direction: column;
  border: 1px solid var(--line);
}
.grid-records { flex: 199 0 0; margin-bottom: 2px; }
.grid-files { flex: 391 0 0; }
.grid table { width: 100%; border-collapse: collapse; table-layout: fixed; }
.grid th {
  height: 18px;
  padding: 0;
  border: 1px solid var(--line);
  border-left: 0;
  background: #f5f5f5;
  font-weight: 400;
}
.grid th:last-child { border-right: 0; }
.grid th svg { width: 8px; height: 8px; margin: 0 auto; }
.grid p {
  display: grid;
  flex: 1;
  place-items: center;
  margin: 0 0 1px 12px;
  color: #a0a0a0;
}
.col-mark { width: 11px; }
.r1 { width: 17.4%; }
.r2 { width: 14.9%; }
.r3 { width: 30.2%; }
.r4 { width: 18%; }
.f1 { width: 16.9%; }
.f2 { width: 42.1%; }
.f3 { width: 22.4%; }

/* Status bar */
.status {
  display: grid;
  grid-template-columns: 101fr 355fr 285fr 85fr 55fr 55fr 130fr 86fr;
  height: 23px;
  padding-top: 2px;
  border-bottom: 2px solid #222;
  font: 11px/20px var(--small);
  white-space: nowrap;
}
.status > span { padding-left: 5px; border-right: 1px solid var(--line); }
.status > span:nth-child(3), .status > span:nth-child(4) { padding-left: 2px; }
.status > span:last-child { border-right: 0; }
.status .keys { display: flex; gap: 9px; padding-left: 4px; }
.keys i { color: #aaa; font-style: normal; }
.keys .on { color: var(--ink); }
```
